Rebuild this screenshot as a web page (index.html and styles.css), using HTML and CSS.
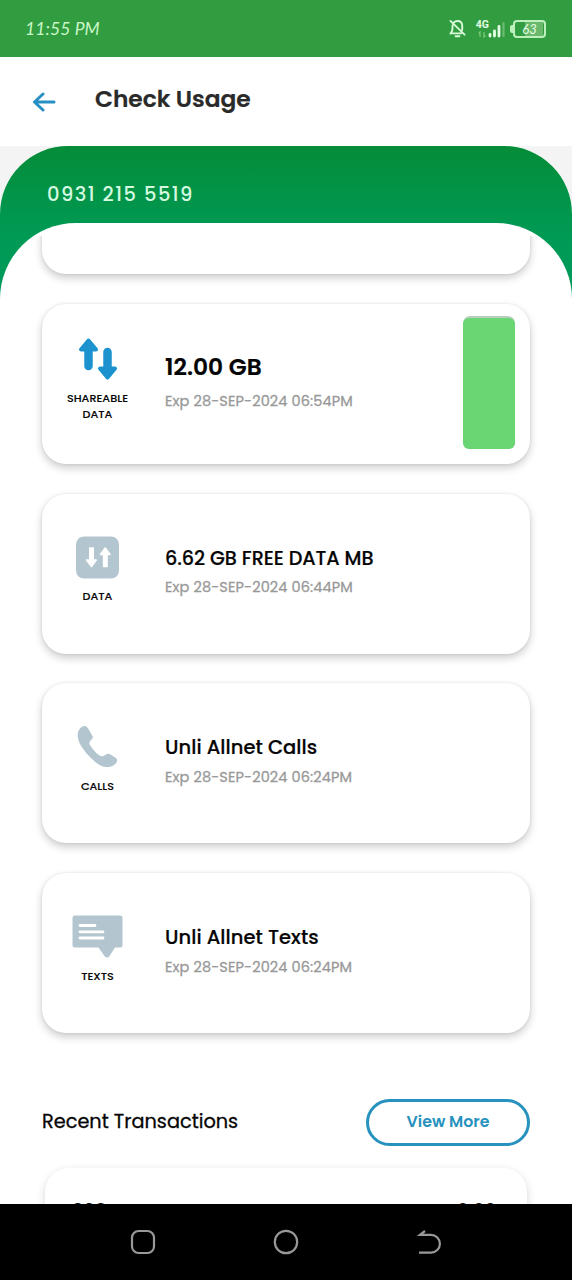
FILE: index.html
```html
<!DOCTYPE html>
<html lang="en">
<head>
<meta charset="utf-8">
<title>Check Usage</title>
<link rel="stylesheet" href="styles.css">
</head>
<body>
<div class="phone">
  <header class="status">
    <span class="time">11:55 PM</span>
    <div class="status-icons">
      <svg class="bell" width="17" height="19" viewBox="0 0 18 20" fill="none" stroke="#d9fbd9" stroke-width="2" stroke-linecap="round"><path d="M5 3.800C6 2.500 7.300 2 9 2c3.200 0 5 2.200 5 5v4.500M3.800 6.500 3.500 12 1.800 15.200h10.800M1.500 2l15 14.500"/><path d="M7 18.200h4"/></svg>
      <div class="network">
        <div class="net-type"><span class="net-label">4G</span><svg width="8" height="7" viewBox="0 0 8 7" stroke="#78cc7a" stroke-width="1.200" fill="none"><path d="M2 6V1L.7 2.500M6 1v5l1.300-1.500"/></svg></div>
        <svg class="bars" width="18" height="18" viewBox="0 0 18 18"><path d="M3 14.500v1.500M7.500 11v5M12 6.500V16" stroke="#e4ffe4" stroke-width="2.800" stroke-linecap="round"/><path d="M16.500 3v13" stroke="#6dbb70" stroke-width="2.200" stroke-linecap="round"/></svg>
      </div>
      <div class="battery"><span class="battery-tip"></span><span class="battery-body">63</span></div>
    </div>
  </header>
  <nav class="appbar">
    <svg class="back" width="24" height="20" viewBox="0 0 24 20" fill="none" stroke="#278fc4" stroke-width="3" stroke-linecap="round" stroke-linejoin="round"><path d="M11 2 2.500 10l8.500 8M3 10H22"/></svg>
    <h1 class="title">Check Usage</h1>
  </nav>
  <main class="hero">
    <div class="number">0931 215 5519</div>
    <section class="panel">
      <div class="scroller">
        <article class="card card-first"></article>
        <article class="card">
          <div class="kind kind-share">
            <svg width="40" height="44" viewBox="0 0 40 44" fill="#1c93ce" stroke="#1c93ce" stroke-linejoin="round" stroke-linecap="round"><path d="M10.500 3.500 3 12.500h15z" stroke-width="4"/><path d="M10.500 10v19M29.500 15v17" stroke-width="8.500"/><path d="M29.500 40.500 22 31.500h15z" stroke-width="4"/></svg>
            <span class="label">SHAREABLE<br>DATA</span>
          </div>
          <div class="info info-share">
            <h2 class="amount big">12.00 GB</h2>
            <p class="expiry">Exp 28-SEP-2024 06:54PM</p>
          </div>
          <div class="meter"><div class="meter-fill"></div></div>
        </article>
        <article class="card">
          <div class="kind">
            <svg width="43" height="43" viewBox="0 0 43 43"><rect width="43" height="42" y=".5" rx="8" fill="#b3c5cf"/><g fill="#fff" stroke="#fff" stroke-width="1.600" stroke-linejoin="round"><path d="M13.800 12h3.400v12h3L15.500 30.500 10.500 24h3.300z"/><path d="M27.600 30.500h3.400V18.500h3L29.300 12l-4.800 6.500h3.100z"/></g></svg>
            <span class="label">DATA</span>
          </div>
          <div class="info">
            <h2 class="amount free">6.62 GB FREE DATA MB</h2>
            <p class="expiry">Exp 28-SEP-2024 06:44PM</p>
          </div>
        </article>
        <article class="card">
          <div class="kind">
            <svg width="43" height="43" viewBox="0 0 43 43"><path d="M8.500 1C4.500 1.500 1.500 5.500 1.700 11c.3 6 4.500 12.500 10.800 19.500 6.500 7 12 11.500 18.500 11.500 5 0 9.300-2.500 10-5.800.3-1.300-.1-2.300-1.200-3.200l-5.300-3.500c-1.600-.9-3-.8-4.500 0l-2.500 1.500c-1.200.6-2.500.4-3.800-.4-4-2.800-7.200-6.500-9.700-10.700-.9-1.500-.8-2.700.2-3.900l2-2.300c.9-1 .8-1.900.1-3l-4-7C10.700 1.600 9.800.9 8.500 1z" fill="#b3c5cf"/></svg>
            <span class="label">CALLS</span>
          </div>
          <div class="info">
            <h2 class="amount">Unli Allnet Calls</h2>
            <p class="expiry">Exp 28-SEP-2024 06:24PM</p>
          </div>
        </article>
        <article class="card">
          <div class="kind">
            <svg width="51" height="43" viewBox="0 0 51 43"><path d="M3 .5h45q2.500 0 2.500 2.500v27q0 2.500-2.500 2.500h-5L37.500 41q-2.500 3-5 0L26.500 32.500H3Q.5 32.500.5 30V3Q.5.500 3 .5z" fill="#b3c5cf"/><path d="M8 10.500h15M8 16.800h23M8 23h23" stroke="#fff" stroke-width="2.800" stroke-linecap="round"/></svg>
            <span class="label">TEXTS</span>
          </div>
          <div class="info">
            <h2 class="amount">Unli Allnet Texts</h2>
            <p class="expiry">Exp 28-SEP-2024 06:24PM</p>
          </div>
        </article>
        <div class="recent">
          <h2 class="recent-title">Recent Transactions</h2>
          <button class="more">View More</button>
        </div>
        <div class="transaction"><span>898</span><span>0.00</span></div>
      </div>
    </section>
  </main>
  <footer class="navbar">
    <svg width="26" height="26" viewBox="0 0 26 26" fill="none" stroke="#999" stroke-width="2.200"><rect x="2" y="2" width="22" height="22" rx="6.500"/></svg>
    <svg width="26" height="26" viewBox="0 0 26 26" fill="none" stroke="#999" stroke-width="2.200"><circle cx="13" cy="13" r="11.200"/></svg>
    <svg width="26" height="26" viewBox="0 0 26 26" fill="none" stroke="#999" stroke-width="2.200"><path d="M9 2 4 5.800H15a8.900 8.900 0 0 1 0 17.800H3"/></svg>
  </footer>
</div>
</body>
</html>
```
FILE: styles.css
```css
* { box-sizing: border-box; }
body {
  margin: 0;
  font-family: "Poppins", "Inter", "Liberation Sans", sans-serif;
  color: #050505;
}
h1, h2, p { margin: 0; white-space: nowrap; }
svg { display: block; flex: none; }
.phone {
  width: 572px;
  height: 1280px;
  display: flex;
  flex-direction: column;
  overflow: hidden;
  background: #fff;
}
.status {
  height: 57px;
  flex: none;
  padding: 0 26px 0 25px;
  display: flex;
  align-items: center;
  justify-content: space-between;
  background: #329c41;
  color: #c9f7c6;
}
.time {
  font: italic 400 17.500px/24px "Lato", sans-serif;
  letter-spacing: .1px;
}
.status-icons { display: flex; align-items: center; }
.bell { margin-right: 10px; }
.network { display: flex; align-items: center; }
.net-type { display: flex; flex-direction: column; align-items: center; gap: 1px; }
.net-label { font: 700 10.500px/11px "Roboto", sans-serif; color: #e4ffe4; }
.bars { margin-left: -2px; }
.battery { display: flex; align-items: center; margin-left: 5px; }
.battery-tip { width: 3px; height: 8px; border-radius: 2px 0 0 2px; background: #bdf0bd; }
.battery-body {
  width: 33px;
  height: 18px;
  border: 2px solid #bdf0bd;
  border-radius: 4px;
  background: linear-gradient(90deg, transparent 10px, #69b86b 10px, #69b86b 28px, transparent 28px);
  font: italic 400 13px/14px "Lato", sans-serif;
  text-align: center;
  color: #e4ffe4;
}
.appbar {
  height: 89px;
  flex: none;
  display: flex;
  align-items: center;
  padding-left: 32px;
}
.back { margin-right: 39px; }
.title {
  font-size: 23.300px;
  line-height: 30px;
  font-weight: 600;
  color: #2a2a2a;
  padding-bottom: 5px;
  -webkit-text-stroke: .2px #2a2a2a;
}
.hero {
  flex: 1;
  min-height: 0;
  display: flex;
  flex-direction: column;
  background: linear-gradient(#058c38, #009a55 90px, #009b5e 160px);
  border-radius: 68px 68px 0 0;
  box-shadow: 0 0 0 68px #f4f4f4;
  clip-path: inset(0);
}
.number {
  height: 77px;
  flex: none;
  padding: 19px 0 0 47px;
  font-size: 19.500px;
  line-height: 60px;
  font-weight: 500;
  letter-spacing: 1.450px;
  color: #d4fae0;
}
.panel {
  flex: 1;
  min-height: 0;
  padding-top: 13px;
  border-radius: 76px 76px 0 0;
  background: #fff;
  overflow: hidden;
}
.scroller {
  height: 100%;
  overflow: hidden;
  padding: 0 42px;
}
.card {
  height: 160px;
  margin-bottom: 29.800px;
  display: flex;
  border-radius: 24px;
  background: #fff;
  box-shadow: 0 4px 8px rgba(0, 0, 0, .2), 0 0 3px rgba(0, 0, 0, .09);
}
.card-first { margin-top: -122px; }
.kind {
  width: 111px;
  padding-top: 42px;
  display: flex;
  flex-direction: column;
  align-items: center;
  gap: 9.500px;
}
.kind-share { padding-top: 33px; }
.label {
  font-size: 11.200px;
  line-height: 16px;
  font-weight: 500;
  text-align: center;
  -webkit-text-stroke: .15px #050505;
}
.info { padding: 53px 0 0 12px; }
.info-share { padding-top: 51.500px; }
.amount {
  font-size: 19.500px;
  line-height: 24px;
  font-weight: 500;
  letter-spacing: .05px;
  -webkit-text-stroke: .2px #050505;
}
.free { font-size: 19.200px; letter-spacing: -.05px; }
.big { font-size: 23.300px; font-weight: 600; }
.expiry {
  margin-top: 6.500px;
  font-size: 14.500px;
  line-height: 20px;
  letter-spacing: .12px;
  color: #999;
  -webkit-text-stroke: .3px #999;
}
.info-share .expiry { margin-top: 11.500px; }
.meter {
  width: 52px;
  height: 133px;
  margin: 12px 15px 0 auto;
  padding-top: 2px;
  border-radius: 7px;
  background: #b9cfbd;
}
.meter-fill { height: 100%; border-radius: 6px; background: #69d673; }
.recent {
  margin-top: 66px;
  display: flex;
  justify-content: space-between;
}
.recent-title { font-size: 19.300px; line-height: 45px; font-weight: 400; -webkit-text-stroke: .3px #050505; }
.more {
  width: 164px;
  height: 47px;
  padding: 0 0 2px;
  border: 3px solid #2792bd;
  border-radius: 24px;
  background: #fff;
  font: 600 15.800px/20px "Poppins", "Inter", sans-serif;
  color: #2792bd;
}
.transaction {
  height: 160px;
  margin: 22px 3px 0;
  padding: 30px 31px 0 27px;
  display: flex;
  justify-content: space-between;
  border-radius: 24px;
  box-shadow: 0 3px 8px rgba(0, 0, 0, .17);
  font-size: 18px;
  line-height: 24px;
  font-weight: 500;
}
.navbar {
  height: 76px;
  flex: none;
  display: flex;
  justify-content: center;
  align-items: center;
  gap: 117px;
  background: #000;
}
```
